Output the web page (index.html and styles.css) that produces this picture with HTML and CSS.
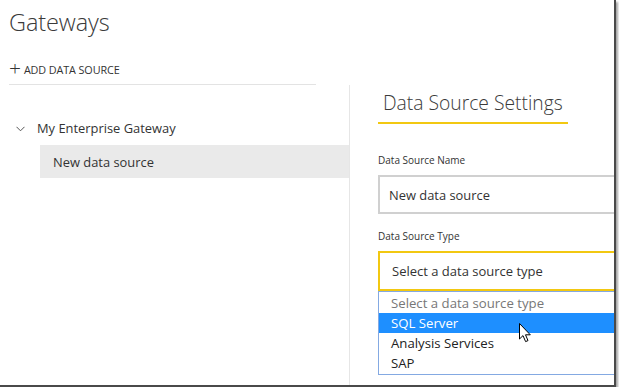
FILE: index.html
```html
<!DOCTYPE html>
<html>
<head>
<meta charset="utf-8">
<link rel="stylesheet" href="styles.css">
</head>
<body>
<div class="frame">
  <div class="header">
    <h1 class="title">Gateways</h1>
    <div class="add"><span class="plus">+</span>ADD DATA SOURCE</div>
  </div>
  <div class="main">
    <div class="tree">
      <div class="gateway">
        <svg class="chev" width="9" height="6" viewBox="0 0 9 6"><path d="M0.5 0.8 L4.5 4.8 L8.5 0.8" fill="none" stroke="#555" stroke-width="1"/></svg>
        <span>My Enterprise Gateway</span>
      </div>
      <div class="source">New data source</div>
    </div>
    <div class="settings">
      <div class="settings-title">Data Source Settings</div>
      <div class="label">Data Source Name</div>
      <div class="input">New data source</div>
      <div class="label">Data Source Type</div>
      <div class="select">Select a data source type</div>
      <div class="list">
        <div class="opt placeholder">Select a data source type</div>
        <div class="opt selected">SQL Server
          <svg class="cursor" width="13" height="20" viewBox="0 0 13 20"><path d="M0.5 0.5 L0.5 16 L4 12.6 L6.6 18.6 L9 17.6 L6.5 11.8 L11.3 11.8 Z" fill="#fff" stroke="#000" stroke-width="1" stroke-linejoin="round"/></svg>
        </div>
        <div class="opt">Analysis Services</div>
        <div class="opt">SAP</div>
      </div>
    </div>
  </div>
</div>
</body>
</html>
```

FILE: styles.css
```css
html, body {
  margin: 0;
  padding: 0;
  background: #ffffff;
}
body {
  font-family: "Open Sans", "Noto Sans", sans-serif;
  color: #333;
}
.frame {
  width: 614px;
  height: 385px;
  border-right: 2px solid #4a4a4a;
  border-bottom: 2px solid #4a4a4a;
  box-shadow: 2px 2px 2px rgba(0,0,0,0.35);
  background: #fff;
  overflow: hidden;
  display: flex;
  flex-direction: column;
}
.header {
  width: 307px;
  margin-left: 9px;
  border-bottom: 1px solid #e3e3e3;
  height: 85px;
  box-sizing: border-box;
  flex: none;
}
.title {
  margin: 0;
  padding-top: 5px;
  font-family: "Open Sans", sans-serif;
  font-weight: 300;
  font-size: 23.5px;
  line-height: 34px;
  color: #3a3a3a;
  letter-spacing: -0.1px;
}
.add {
  margin-top: 23px;
  height: 14px;
  font-size: 10.8px;
  color: #333;
  display: flex;
  align-items: center;
  letter-spacing: -0.1px;
}
.plus {
  font-size: 21px;
  font-weight: 300;
  line-height: 14px;
  margin-right: 3px;
  margin-top: -3px;
}
.main {
  flex: 1;
  display: flex;
}
.tree {
  width: 349px;
  border-right: 1px solid #e6e6e6;
  padding-top: 33px;
  box-sizing: content-box;
  flex: none;
}
.gateway {
  display: flex;
  align-items: center;
  margin-left: 16px;
  font-size: 12.9px;
  height: 20px;
  color: #333;
}
.chev {
  margin-right: 12px;
  margin-top: 1px;
}
.source {
  margin-left: 40px;
  margin-top: 7px;
  height: 33px;
  background: #eaeaea;
  padding-left: 13px;
  display: flex;
  align-items: center;
  font-size: 12.9px;
  color: #333;
}
.settings {
  flex: 1;
  padding-left: 28px;
  padding-top: 3px;
}
.settings-title {
  display: inline-block;
  font-weight: 300;
  font-size: 19.3px;
  line-height: 25px;
  padding: 2px 5px 7px 5px;
  border-bottom: 2px solid #f2c811;
  color: #3a3a3a;
}
.label {
  font-size: 10px;
  color: #333;
  line-height: 14px;
}
.settings-title + .label {
  margin-top: 29px;
}
.input {
  margin-top: 8px;
  height: 39px;
  box-sizing: border-box;
  border: 2px solid #d0d0d0;
  border-right: none;
  padding-left: 9px;
  display: flex;
  align-items: center;
  font-size: 12.9px;
  color: #333;
}
.input + .label {
  margin-top: 15px;
}
.select {
  margin-top: 8px;
  height: 40px;
  box-sizing: border-box;
  border: 2px solid #f2c811;
  border-right: none;
  padding-left: 12px;
  display: flex;
  align-items: center;
  font-size: 13px;
  color: #333;
}
.list {
  margin-top: 0;
  border: 1px solid #84a9e2;
  border-right: none;
  padding: 1px 0 1px 0;
}
.opt {
  position: relative;
  height: 20px;
  line-height: 20px;
  padding-left: 12px;
  font-size: 13.2px;
  color: #222;
}
.opt.placeholder {
  color: #777;
}
.opt.selected {
  background: #1e8fff;
  color: #fff;
}
.cursor {
  position: absolute;
  left: 140px;
  top: 10px;
}
```
